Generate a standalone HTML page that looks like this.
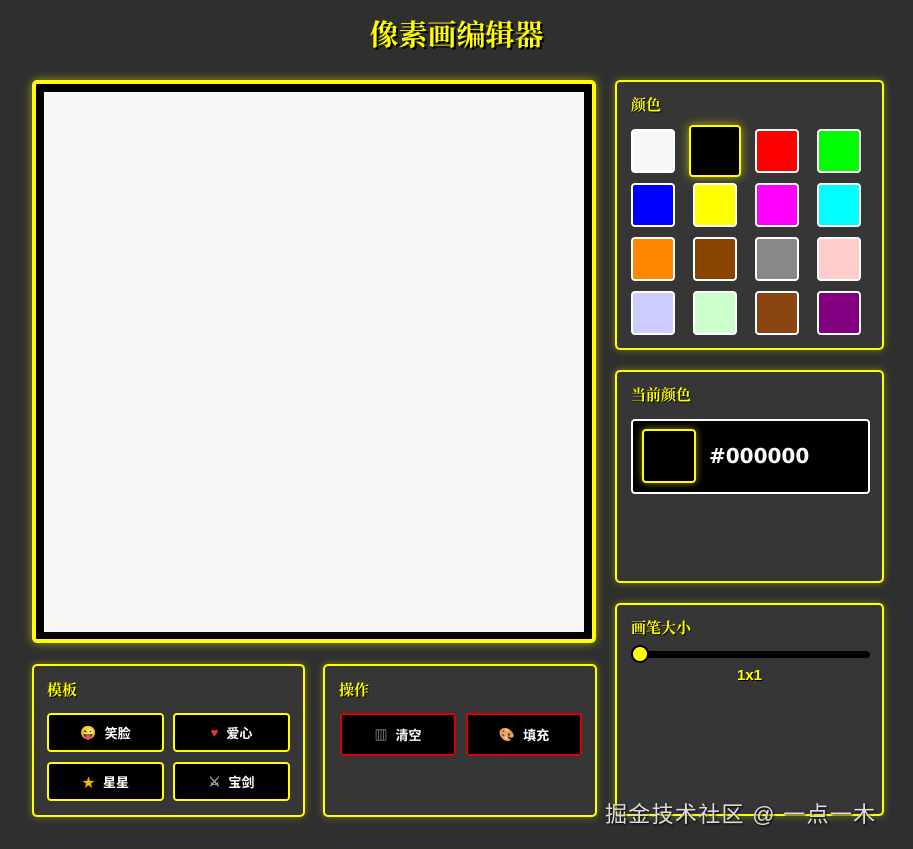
<!DOCTYPE html>
<html><head><meta charset="utf-8"><style>
*{box-sizing:border-box;margin:0;padding:0}
body{width:913px;height:849px;background:#2f2f2f;font-family:"Liberation Sans","Noto Sans CJK SC",sans-serif;position:relative;overflow:hidden}
.abs{position:absolute}
h1{position:absolute;left:0;width:913px;top:13px;text-align:center;color:#ffff00;font-size:29px;font-weight:bold;text-shadow:2px 2px 0 #000;font-family:"Noto Serif CJK SC",serif}
.panel{position:absolute;border:2px solid #ffff00;border-radius:5px;background:#363636;box-shadow:0 0 8px rgba(255,255,0,.35)}
.pt{position:absolute;color:#ffff00;font-weight:bold;font-size:15px;text-shadow:1px 1px 0 #000;font-family:"Noto Serif CJK SC",serif}
.sw{position:absolute;width:44px;height:44px;border:2px solid #fff;border-radius:4px}
.btn{position:absolute;background:#000;border:2px solid #ffff00;border-radius:4px;color:#fff;font-size:13px;font-weight:bold;display:flex;align-items:center;justify-content:center;gap:8px}
.red{border-color:#e00000}
</style></head><body>
<h1>像素画编辑器</h1>
<div class="abs" style="left:32px;top:80px;width:564px;height:563px;background:#000;border:4px solid #ffff00;border-radius:5px;box-shadow:0 0 10px rgba(255,255,0,.5)"></div>
<div class="abs" style="left:44px;top:92px;width:540px;height:540px;background:#f8f8f8"></div>

<div class="panel" style="left:615px;top:80px;width:269px;height:270px"></div>
<div class="pt" style="left:631px;top:94px">颜色</div>
<div class="sw" style="left:631px;top:129px;background:#f8f8f8"></div>
<div class="sw" style="left:689px;top:125px;width:52px;height:52px;background:#000;border-color:#ffff00;box-shadow:0 0 10px rgba(255,255,0,.6)"></div>
<div class="sw" style="left:755px;top:129px;background:#f00"></div>
<div class="sw" style="left:817px;top:129px;background:#0f0"></div>
<div class="sw" style="left:631px;top:183px;background:#00f"></div>
<div class="sw" style="left:693px;top:183px;background:#ff0"></div>
<div class="sw" style="left:755px;top:183px;background:#f0f"></div>
<div class="sw" style="left:817px;top:183px;background:#0ff"></div>
<div class="sw" style="left:631px;top:237px;background:#ff8800"></div>
<div class="sw" style="left:693px;top:237px;background:#884400"></div>
<div class="sw" style="left:755px;top:237px;background:#888"></div>
<div class="sw" style="left:817px;top:237px;background:#fcc"></div>
<div class="sw" style="left:631px;top:291px;background:#ccf"></div>
<div class="sw" style="left:693px;top:291px;background:#cfc"></div>
<div class="sw" style="left:755px;top:291px;background:#8b4513"></div>
<div class="sw" style="left:817px;top:291px;background:#800080"></div>

<div class="panel" style="left:615px;top:370px;width:269px;height:213px"></div>
<div class="pt" style="left:631px;top:384px">当前颜色</div>
<div class="abs" style="left:631px;top:419px;width:239px;height:75px;background:#000;border:2px solid #fff;border-radius:4px"></div>
<div class="abs" style="left:642px;top:429px;width:54px;height:54px;background:#000;border:2px solid #ffff00;border-radius:4px;box-shadow:0 0 8px rgba(255,255,0,.5)"></div>
<div class="abs" style="left:709px;top:444px;color:#fff;font-size:20px;font-weight:bold;font-family:'DejaVu Sans',sans-serif">#000000</div>

<div class="panel" style="left:615px;top:603px;width:269px;height:213px"></div>
<div class="pt" style="left:631px;top:617px">画笔大小</div>
<div class="abs" style="left:633px;top:651px;width:237px;height:7px;background:#000;border-radius:4px"></div>
<div class="abs" style="left:631px;top:645px;width:18px;height:18px;background:#ffff00;border:2px solid #000;border-radius:50%"></div>
<div class="abs" style="left:615px;width:269px;top:667px;text-align:center;color:#ffff00;font-weight:bold;font-size:15px;text-shadow:1px 1px 0 #000">1x1</div>

<div class="panel" style="left:32px;top:664px;width:273px;height:153px"></div>
<div class="pt" style="left:47px;top:679px">模板</div>
<div class="btn" style="left:47px;top:713px;width:117px;height:39px"><span>😜</span>笑脸</div>
<div class="btn" style="left:173px;top:713px;width:117px;height:39px"><span style="color:#e33">♥</span>爱心</div>
<div class="btn" style="left:47px;top:762px;width:117px;height:39px"><span style="color:#f5b800">★</span>星星</div>
<div class="btn" style="left:173px;top:762px;width:117px;height:39px"><span style="color:#aab">⚔</span>宝剑</div>

<div class="panel" style="left:323px;top:664px;width:274px;height:153px"></div>
<div class="pt" style="left:339px;top:679px">操作</div>
<div class="btn red" style="left:340px;top:713px;width:116px;height:43px"><span style="color:#aaa">▥</span>清空</div>
<div class="btn red" style="left:466px;top:713px;width:116px;height:43px"><span>🎨</span>填充</div>

<div class="abs" style="left:605px;top:797px;color:#ddd;font-size:22px;letter-spacing:1.3px;text-shadow:1px 1px 2px #000">掘金技术社区 @ 一点一木</div>
</body></html>
